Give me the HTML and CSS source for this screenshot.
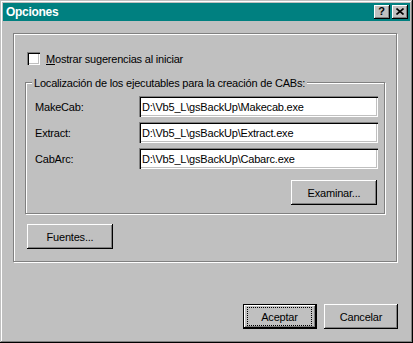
FILE: index.html
```html
<!DOCTYPE html>
<html>
<head>
    <meta charset="UTF-8" />
    <title>Opciones</title>
    <link rel="stylesheet" href="styles.css">
</head>

<body>
    <div class="window">
        <div class="titlebar">
            <span class="title">Opciones</span>
            <div class="title-buttons">
                <button class="tbtn help">?</button>
                <button class="tbtn close">
                    <svg width="8" height="7" viewBox="0 0 8 7">
                        <path d="M0.5 0.5 L7.5 6.5 M7.5 0.5 L0.5 6.5" stroke="#000" stroke-width="1.6" fill="none" />
                    </svg>
                </button>
            </div>
        </div>

        <div class="dialog">
            <div class="panel">
                <label class="check-row">
                    <span class="checkbox"></span>
                    <span><u>M</u>ostrar sugerencias al iniciar</span>
                </label>

                <div class="group">
                    <span class="group-title">Localización de los ejecutables para la creación de CABs:</span>
                    <div class="rows">
                        <div class="row">
                            <span class="row-label">MakeCab:</span>
                            <input class="field" type="text" value="D:\Vb5_L\gsBackUp\Makecab.exe">
                        </div>
                        <div class="row">
                            <span class="row-label">Extract:</span>
                            <input class="field" type="text" value="D:\Vb5_L\gsBackUp\Extract.exe">
                        </div>
                        <div class="row">
                            <span class="row-label">CabArc:</span>
                            <input class="field" type="text" value="D:\Vb5_L\gsBackUp\Cabarc.exe">
                        </div>
                    </div>
                    <div class="group-actions">
                        <button class="btn btn-wide">Examinar...</button>
                    </div>
                </div>

                <button class="btn btn-wide fonts-btn">Fuentes...</button>
            </div>

            <div class="footer">
                <button class="btn default"><span class="focus">Aceptar</span></button>
                <button class="btn">Cancelar</button>
            </div>
        </div>
    </div>
</body>
</html>
```

FILE: styles.css
```css
* {
    margin: 0;
    padding: 0;
    box-sizing: border-box;
}

body {
    background: #c0c0c0;
    font-family: "Liberation Sans", Arial, sans-serif;
    font-size: 11px;
    letter-spacing: -0.2px;
    color: #000;
}

.window {
    width: 413px;
    height: 343px;
    padding: 3px;
    background: #c0c0c0;
    box-shadow: inset -1px -1px #000, inset 1px 1px #c0c0c0,
        inset -2px -2px #808080, inset 2px 2px #fff;
}

.titlebar {
    height: 18px;
    background: #008080;
    display: flex;
    align-items: center;
    justify-content: space-between;
    padding: 0 2px 0 3px;
}

.title {
    color: #fff;
    font-weight: bold;
    font-size: 12px;
    letter-spacing: -0.3px;
}

.title-buttons {
    display: flex;
    gap: 2px;
}

.tbtn {
    width: 16px;
    height: 14px;
    border: none;
    background: #c0c0c0;
    display: flex;
    align-items: center;
    justify-content: center;
    font-family: "Liberation Sans", Arial, sans-serif;
    font-size: 11px;
    font-weight: bold;
    line-height: 1;
    box-shadow: inset -1px -1px #000, inset 1px 1px #fff, inset -2px -2px #808080;
}

.tbtn.help {
    padding: 0 1px 1px 0;
}

.tbtn.close svg {
    display: block;
    margin: 0 1px 1px 0;
}

.dialog {
    padding: 12px 0 0 10px;
}

.panel {
    width: 384px;
    height: 229px;
    border: 1px solid #808080;
    box-shadow: 1px 1px #fff, inset 1px 1px #fff;
    padding-top: 18px;
}

.check-row {
    display: flex;
    align-items: center;
    gap: 6px;
    height: 13px;
    margin-left: 13px;
}

.checkbox {
    width: 13px;
    height: 13px;
    background: #fff;
    box-shadow: inset 1px 1px #808080, inset 2px 2px #000,
        inset -1px -1px #fff, inset -2px -2px #c0c0c0;
}

.group {
    position: relative;
    width: 360px;
    height: 132px;
    margin: 17px 0 0 11px;
    border: 1px solid #808080;
    box-shadow: 1px 1px #fff, inset 1px 1px #fff;
    padding: 13px 0 0 9px;
}

.group-title {
    position: absolute;
    top: -6px;
    left: 6px;
    padding: 0 2px;
    line-height: 13px;
    background: #c0c0c0;
}

.rows {
    display: flex;
    flex-direction: column;
    gap: 5px;
}

.row {
    display: flex;
    align-items: center;
    height: 21px;
}

.row-label {
    width: 104px;
}

.field {
    width: 239px;
    height: 21px;
    border: none;
    outline: none;
    padding: 1px 3px 0;
    background: #fff;
    font-family: inherit;
    font-size: 11px;
    letter-spacing: -0.2px;
    color: #000;
    box-shadow: inset 1px 1px #808080, inset 2px 2px #000,
        inset -1px -1px #fff, inset -2px -2px #c0c0c0;
}

.group-actions {
    display: flex;
    justify-content: flex-end;
    margin: 11px 7px 0 0;
}

.btn {
    width: 74px;
    height: 25px;
    border: none;
    background: #c0c0c0;
    font-family: inherit;
    font-size: 11px;
    letter-spacing: -0.2px;
    color: #000;
    box-shadow: inset -1px -1px #000, inset 1px 1px #fff, inset -2px -2px #808080;
}

.btn-wide {
    width: 86px;
}

.fonts-btn {
    margin: 10px 0 0 13px;
}

.footer {
    display: flex;
    justify-content: flex-end;
    gap: 7px;
    margin-top: 42px;
    padding-right: 12px;
}

.btn.default {
    border: 1px solid #000;
    display: flex;
    padding: 2px 4px 2px 3px;
}

.focus {
    flex: 1;
    display: flex;
    align-items: center;
    justify-content: center;
    border: 1px dotted #000;
}
```
